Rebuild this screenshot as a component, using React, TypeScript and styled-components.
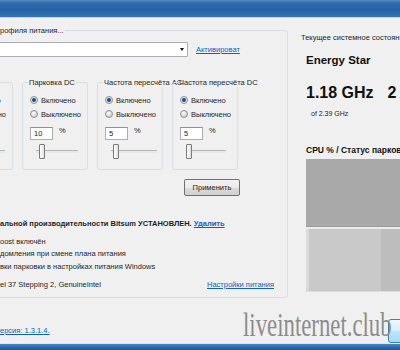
import React from "react";
import styled, { createGlobalStyle } from "styled-components";

const Global = createGlobalStyle`
  html, body { margin: 0; padding: 0; background: #f0f0f0; }
  body { width: 400px; height: 350px; overflow: hidden; }
`;

const Window = styled.div`
  position: relative;
  width: 400px;
  height: 350px;
  overflow: hidden;
  background: #f0f0f0;
  display: flex;
  flex-direction: column;
  font-family: "Liberation Sans", Arial, sans-serif;
  font-size: 7.5px;
  color: #1e1e1e;
`;

const TitleBar = styled.div`
  flex: none;
  height: 17px;
  background: linear-gradient(#5a8cc2 0px, #2e6cab 3px, #2563a6 10px, #3575b4 17px);
  border-bottom: 1px solid #c3d3e2;
`;

const Content = styled.div`
  flex: 1;
  display: flex;
  flex-direction: column;
  min-height: 0;
`;

const TopArea = styled.div`
  display: flex;
  align-items: flex-start;
`;

const ProfileBox = styled.fieldset`
  box-sizing: border-box;
  flex: none;
  margin: 8px 0 0 -60px;
  padding: 0 0 0 6px;
  min-width: 0;
  width: 348px;
  height: 272px;
  border: 1px solid #d5dfe5;
  border-radius: 3px;
`;

const BoxLegend = styled.legend<{ $indent: number }>`
  margin-left: ${(p) => p.$indent}px;
  padding: 0 1px;
  font-size: 7.5px;
  line-height: 9px;
  white-space: nowrap;
`;

const ComboRow = styled.div`
  display: flex;
  align-items: center;
  margin-top: 7px;
  height: 15px;
`;

const Combo = styled.div`
  box-sizing: border-box;
  width: 241px;
  height: 15px;
  background: #fff;
  border: 1px solid #abadb3;
  border-radius: 1px;
  display: flex;
  align-items: center;
  justify-content: flex-end;
  padding-right: 3px;
`;

const ComboArrow = styled.span`
  width: 0;
  height: 0;
  border-left: 2.5px solid transparent;
  border-right: 2.5px solid transparent;
  border-top: 3px solid #111;
`;

const Link = styled.a<{ $bold?: boolean; $gap?: number }>`
  color: #0b62c4;
  text-decoration: underline;
  white-space: nowrap;
  font-weight: ${(p) => (p.$bold ? 700 : 400)};
  margin-left: ${(p) => p.$gap ?? 0}px;
  cursor: pointer;
`;

const SettingsRow = styled.div`
  display: flex;
  gap: 9px;
  margin-top: 21px;
  width: 293px;
`;

const SettingBox = styled.fieldset`
  box-sizing: border-box;
  flex: none;
  margin: 0;
  padding: 6px 0 0 0;
  min-width: 0;
  width: 66px;
  height: 92px;
  border: 1px solid #d5dfe5;
  border-radius: 3px;
  display: flex;
  flex-direction: column;
`;

const RadioRow = styled.label`
  display: flex;
  align-items: center;
  height: 14px;
  padding-left: 7px;
  white-space: nowrap;
`;

const Radio = styled.span<{ $on?: boolean }>`
  box-sizing: border-box;
  width: 8px;
  height: 8px;
  border-radius: 50%;
  border: 1px solid #8e8f8f;
  background: ${(p) =>
    p.$on
      ? "radial-gradient(circle, #1d3f78 0, #2f5fa0 1.6px, #dfe6ee 2.4px, #f2f2f2 4px)"
      : "radial-gradient(circle at 40% 35%, #ffffff 0, #e6e6e6 2px, #cfcfcf 4px)"};
  margin-right: 3px;
  flex: none;
`;

const ValueRow = styled.div`
  display: flex;
  align-items: flex-start;
  margin-top: 6px;
  padding-left: 7px;
  height: 13px;
`;

const NumInput = styled.input`
  box-sizing: border-box;
  width: 23px;
  height: 13px;
  margin: 0;
  padding: 0 0 0 3px;
  border: 1px solid #abadb3;
  border-top-color: #8e9299;
  background: #fff;
  font-family: "Liberation Sans", Arial, sans-serif;
  font-size: 7.5px;
  color: #1e1e1e;
  outline: none;
`;

const Percent = styled.span`
  margin-left: 6px;
  line-height: 8px;
`;

const SliderTrack = styled.div<{ $w: number }>`
  display: flex;
  align-items: center;
  margin: 4px 0 0 13px;
  width: ${(p) => p.$w}px;
  height: 15px;
  background: linear-gradient(
    to bottom,
    transparent 6px,
    #b5b5b5 6px,
    #b5b5b5 7px,
    #e9e9e9 7px,
    #e9e9e9 9px,
    transparent 9px
  );
`;

const Thumb = styled.span<{ $pos: number }>`
  box-sizing: border-box;
  margin-left: ${(p) => p.$pos}px;
  width: 6px;
  height: 15px;
  border: 1px solid #7a7a7a;
  border-radius: 1px;
  background: linear-gradient(to right, #fdfdfd, #e2e2e2);
`;

const ApplyRow = styled.div`
  display: flex;
  justify-content: flex-end;
  width: 293px;
  margin-top: 9px;
`;

const PushButton = styled.button`
  box-sizing: border-box;
  width: 56px;
  height: 17px;
  margin: 0;
  padding: 0;
  border: 1px solid #707070;
  border-radius: 2px;
  background: linear-gradient(#f2f2f2 0, #ebebeb 50%, #dddddd 50%, #cfcfcf 100%);
  font-family: "Liberation Sans", Arial, sans-serif;
  font-size: 7.5px;
  color: #1e1e1e;
`;

const StatusBlock = styled.div`
  padding-left: 53px;
  width: 274px;
  box-sizing: border-box;
  margin-top: 22px;
`;

const BoldLine = styled.div`
  font-weight: 700;
  line-height: 12px;
  white-space: nowrap;
`;

const Options = styled.div`
  margin-top: 5.5px;
`;

const Line = styled.div`
  line-height: 12.5px;
  white-space: nowrap;
`;

const InfoRow = styled.div`
  box-sizing: border-box;
  display: flex;
  justify-content: space-between;
  align-items: center;
  margin-top: 6px;
  padding-left: 53px;
  line-height: 12px;
  width: 327px;
  white-space: nowrap;
`;

const StatePane = styled.div`
  flex: none;
  width: 200px;
  display: flex;
  flex-direction: column;
`;

const StateTitle = styled.div`
  margin: 15px 0 0 13px;
  line-height: 10px;
  white-space: nowrap;
`;

const ProfileName = styled.div`
  margin: 10px 0 0 18px;
  font-size: 11.5px;
  font-weight: 700;
  line-height: 14px;
  color: #111;
`;

const FreqRow = styled.div`
  display: flex;
  margin: 16px 0 0 18px;
  font-size: 16px;
  font-weight: 700;
  line-height: 20px;
  color: #111;
  white-space: nowrap;
`;

const Cores = styled.span`
  margin-left: 14px;
`;

const CoresUnit = styled.span`
  margin-left: 3px;
  color: #b37a3a;
`;

const MaxFreq = styled.div`
  margin: 6px 0 0 23px;
  font-size: 7px;
  line-height: 10px;
`;

const GraphTitle = styled.div`
  margin: 26px 0 0 18px;
  font-weight: 700;
  font-size: 8.5px;
  line-height: 11px;
  white-space: nowrap;
  color: #111;
`;

const Graph = styled.div`
  margin: 3px 0 0 18px;
  width: 130px;
  height: 133px;
  display: flex;
  flex-direction: column;
`;

const GraphTop = styled.div`
  height: 67px;
  background: #a9a9a9;
  border-bottom: 1px solid #9c9c9c;
`;

const GraphSep = styled.div`
  height: 2px;
  background: #ececec;
`;

const GraphCores = styled.div`
  flex: 1;
  display: flex;
  border-left: 3px solid #dadada;
  border-bottom: 1px solid #dcdcdc;
`;

const CoreCell = styled.div<{ $w?: number; $shade: string }>`
  ${(p) => (p.$w ? `width: ${p.$w}px;` : "flex: 1;")}
  background: ${(p) => p.$shade};
`;

const BottomRow = styled.div`
  margin-top: auto;
  height: 26px;
  display: flex;
  align-items: center;
  justify-content: space-between;
`;

const CornerButton = styled.button`
  box-sizing: border-box;
  width: 40px;
  height: 24px;
  margin: 2px -28px 0 0;
  align-self: flex-start;
  border: 1px solid #3c7fb1;
  border-radius: 3px;
  background: linear-gradient(#edf7fd, #d9effc 50%, #bee6fd 50%, #a7d9f5);
`;

const BottomBar = styled.div`
  flex: none;
  height: 6px;
  border-top: 1px solid #dde7f0;
  background: linear-gradient(#4a86c2, #2a67a8 60%, #1f5896);
`;

const Watermark = styled.div`
  position: absolute;
  left: 243px;
  top: 308px;
  font-family: "Liberation Serif", "Times New Roman", serif;
  font-size: 34px;
  line-height: 34px;
  color: #8c8c8c;
  white-space: nowrap;
  transform: scaleX(0.67);
  transform-origin: left top;
  pointer-events: none;
`;

type Setting = { title: string; value: string; pos: number; track: number };

const settings: Setting[] = [
  { title: "Парковка AC", value: "10", pos: 3, track: 44 },
  { title: "Парковка DC", value: "10", pos: 3, track: 42 },
  { title: "Частота пересчёта AC", value: "5", pos: 2, track: 46 },
  { title: "Частота пересчёта DC", value: "5", pos: 0, track: 40 },
];

export default function App() {
  return (
    <>
      <Global />
      <Window>
        <TitleBar />
        <Content>
          <TopArea>
            <ProfileBox>
              <BoxLegend $indent={52}>рофиля питания...</BoxLegend>
              <ComboRow>
                <Combo>
                  <ComboArrow />
                </Combo>
                <Link $gap={8}>Активироват</Link>
              </ComboRow>
              <SettingsRow>
                {settings.map((s, i) => (
                  <SettingBox key={s.title}>
                    <BoxLegend $indent={i === 0 ? 3 : 5}>{s.title}</BoxLegend>
                    <RadioRow>
                      <Radio $on />
                      Включено
                    </RadioRow>
                    <RadioRow>
                      <Radio />
                      Выключено
                    </RadioRow>
                    <ValueRow>
                      <NumInput readOnly defaultValue={s.value} />
                      <Percent>%</Percent>
                    </ValueRow>
                    <SliderTrack $w={s.track}>
                      <Thumb $pos={s.pos} />
                    </SliderTrack>
                  </SettingBox>
                ))}
              </SettingsRow>
              <ApplyRow>
                <PushButton>Применить</PushButton>
              </ApplyRow>
              <StatusBlock>
                <BoldLine>
                  альной производительности Bitsum УСТАНОВЛЕН. <Link $bold>Удалить</Link>
                </BoldLine>
                <Options>
                  <Line>oost включён</Line>
                  <Line>домления при смене плана питания</Line>
                  <Line>вки парковки в настройках питания Windows</Line>
                </Options>
              </StatusBlock>
              <InfoRow>
                <span>el 37 Stepping 2, GenuineIntel</span>
                <Link>Настройки питания</Link>
              </InfoRow>
            </ProfileBox>
            <StatePane>
              <StateTitle>Текущее системное состояние процессора</StateTitle>
              <ProfileName>Energy Star</ProfileName>
              <FreqRow>
                1.18 GHz<Cores>2</Cores>
                <CoresUnit>ядра</CoresUnit>
              </FreqRow>
              <MaxFreq>of 2.39 GHz</MaxFreq>
              <GraphTitle>CPU % / Статус парковки ядер</GraphTitle>
              <Graph>
                <GraphTop />
                <GraphSep />
                <GraphCores>
                  <CoreCell $w={72} $shade="#c9c9c9" />
                  <CoreCell $shade="#bdbdbd" />
                </GraphCores>
              </Graph>
            </StatePane>
          </TopArea>
          <BottomRow>
            <Link>ерсия: 1.3.1.4.</Link>
            <CornerButton />
          </BottomRow>
        </Content>
        <BottomBar />
        <Watermark>liveinternet.club</Watermark>
      </Window>
    </>
  );
}
